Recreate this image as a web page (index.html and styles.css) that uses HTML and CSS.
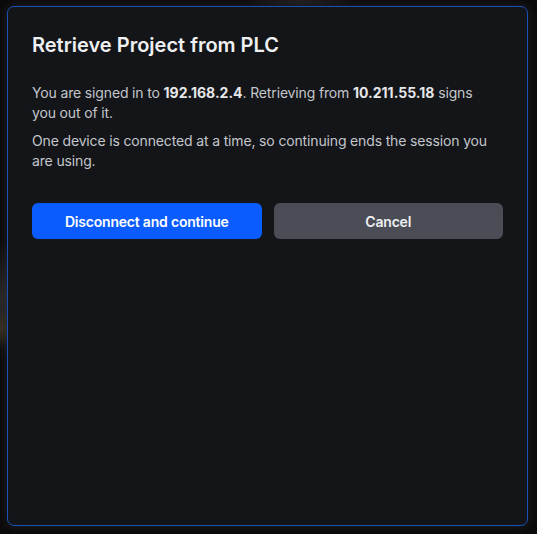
FILE: index.html
```html
<!DOCTYPE html>
<html lang="en">
<head>
<meta charset="utf-8">
<title>Retrieve Project from PLC</title>
<link rel="stylesheet" href="styles.css">
</head>
<body>
<div class="backdrop">
  <section class="dialog" role="dialog" aria-labelledby="dlg-title">
    <h2 class="dialog-title" id="dlg-title">Retrieve Project from PLC</h2>
    <div class="dialog-body">
      <p>You are signed in to <strong>192.168.2.4</strong>. Retrieving from <strong>10.211.55.18</strong> signs you out of it.</p>
      <p>One device is connected at a time, so continuing ends the session you are using.</p>
    </div>
    <div class="dialog-actions">
      <button class="btn btn-primary" type="button">Disconnect and continue</button>
      <button class="btn btn-secondary" type="button">Cancel</button>
    </div>
  </section>
</div>
</body>
</html>
```
FILE: styles.css
```css
html, body {
  margin: 0;
  padding: 0;
  height: 100%;
}

body {
  background: #0b0b0c;
  font-family: Inter, "Noto Sans", sans-serif;
  -webkit-font-smoothing: antialiased;
}

.backdrop {
  box-sizing: border-box;
  height: 534px;
  padding: 6px 9px 8px 7px;
  background:
    radial-gradient(ellipse 30px 60px at 0px 300px, rgba(80, 80, 85, 0.45), transparent),
    radial-gradient(ellipse 14px 20px at 0px 328px, rgba(120, 95, 20, 0.35), transparent),
    radial-gradient(ellipse 60px 10px at 300px 0px, rgba(70, 70, 75, 0.35), transparent),
    #0b0b0c;
}

.dialog {
  box-sizing: border-box;
  height: 520px;
  width: 521px;
  background: #141518;
  border: 1px solid #1b50b8;
  border-radius: 7px;
  padding: 24px 24px;
  box-shadow: 0 0 10px rgba(70, 70, 75, 0.35);
  display: flex;
  flex-direction: column;
}

.dialog-title {
  margin: 0 0 24px;
  font-size: 20px;
  line-height: 28px;
  font-weight: 600;
  color: #eff0f2;
}

.dialog-body {
  display: flex;
  flex-direction: column;
  gap: 8px;
}

.dialog-body p {
  margin: 0;
  padding-right: 10px;
  font-size: 14px;
  line-height: 20px;
  color: #c3c6cc;
  letter-spacing: -0.15px;
}

.dialog-body strong {
  font-weight: 700;
  color: #e6e7ea;
  letter-spacing: 0;
}

.dialog-actions {
  margin-top: 32px;
  display: grid;
  grid-template-columns: 1fr 1fr;
  gap: 12px;
}

.btn {
  height: 36px;
  border: none;
  border-radius: 6px;
  font-family: inherit;
  font-size: 14px;
  font-weight: 600;
  letter-spacing: -0.2px;
  color: #ffffff;
  cursor: pointer;
}

.btn-primary {
  background: #0a5cfe;
}

.btn-secondary {
  background: #4a4d56;
  color: #eeeff1;
}
```
